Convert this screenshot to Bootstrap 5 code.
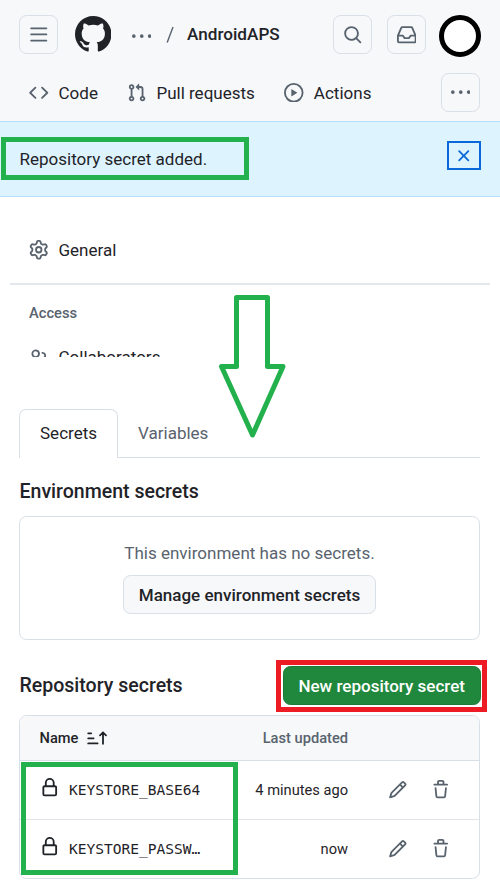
<!DOCTYPE html>
<html lang="en">
<head>
<meta charset="utf-8">
<meta name="viewport" content="width=device-width, initial-scale=1">
<title>AndroidAPS · Secrets</title>
<link href="https://cdn.jsdelivr.net/npm/bootstrap@5.3.0/dist/css/bootstrap.min.css" rel="stylesheet">
<style>
:root{--line:#d9dfe6;--ink:#1f2328;--soft:#59636e;--mark:#22b14c}
body{font-family:Roboto,sans-serif;font-size:17.03px;line-height:24px;color:var(--ink);background:#fff;width:500px;height:886px;overflow:hidden}
svg{display:block;flex:none;fill:currentColor}
.ico{width:19.5px;height:19.5px}
.soft{color:var(--soft)}
.topbar{height:121px;background:#f6f8fa;padding:15px 20px 0 19px}
.toprow{height:39px}
.sq{width:39px;height:39px;padding:0;border:1.3px solid var(--line);border-radius:7.5px;color:var(--soft);background:transparent;display:flex;align-items:center;justify-content:center}
.logo{width:36.5px;height:36.5px;margin-left:16.5px}
.crumb{margin-left:20.5px}
.slash{margin:0 13px 0 15px}
.repo{font-weight:500;font-size:17.15px;margin-top:-1px}
.avatar{width:42px;height:42px;border:5px solid #000;border-radius:50%;background:#fff;margin:2px -1px 0 13px}
.subnav{margin-top:19px;padding-left:10px}
.subnav .tabitem{display:flex;align-items:center;gap:10px}
.notice{height:76px;background:#ddf4ff;border-top:1.3px solid #b5defc;border-bottom:1.3px solid #b5defc;padding:0 19.5px}
.closer{width:34px;height:29px;border:2px solid #0969da;border-radius:0;color:#0969da;padding:0;display:flex;align-items:center;justify-content:center;margin-top:-7px;background:none}
.side{height:159.5px;overflow:hidden;padding:41px 10px 0}
.side .item{padding-left:19px;gap:10px}
.side hr{margin:21px 0 16px;border:0;height:2px;background:#e3e6ea;opacity:1}
.side .group{font-size:14.7px;font-weight:500;padding-left:19px;margin-bottom:20px}
.main{padding:0 20px 0 19px}
.tabs{margin-top:52.5px;height:49px;border-bottom:1.3px solid var(--line);border-radius:0}
.tabs .nav-link{padding:0 20.5px;height:49px;line-height:49px;color:var(--soft);border:0;border-radius:7px 7px 0 0}
.tabs .nav-link.active{border:1.3px solid var(--line);border-bottom:0;background:#fff;color:var(--ink);padding:0 19.5px 0 20px;line-height:47px}
.heading{font-size:19.55px;font-weight:500;line-height:24px;margin:0;padding-left:.5px}
.blank{margin-top:12px;height:124px;border:1.3px solid var(--line);border-radius:7.5px;padding-top:24px;text-align:center}
.act{height:39px;padding:0 14.5px;font-size:17.03px;font-weight:500;line-height:36px;border-radius:7.5px;border:1.3px solid var(--line);background:#f6f8fa;color:var(--ink)}
.act.go{background:#1f883d;color:#fff;border-color:#1c7a37;margin-right:-.5px}
.grid{margin-top:10px;border:1.3px solid var(--line);border-radius:7.5px;font-size:14.65px;overflow:hidden}
.line{display:flex;align-items:center;height:59px;padding-left:19.5px}
.line+.line{border-top:1.3px solid #e1e5ea}
.line.top{height:43.5px;background:#f6f8fa;font-weight:500}
.line.top+.line{border-top-color:var(--line)}
.c1{width:170px}.c2{width:138.5px;text-align:right}
.code{font-family:"DejaVu Sans Mono",monospace;font-size:14.56px;margin-left:10px}
.pen{margin-left:39.5px}.bin{margin-left:24px}
.frame{position:absolute;border:5px solid var(--mark);pointer-events:none}
.f1{left:1px;top:137px;width:248px;height:43px}
.f2{left:276px;top:660px;width:211px;height:52px;border-color:#ed1c24}
.f3{left:21px;top:762px;width:217px;height:113px}
.arrow{position:absolute;left:215px;top:290px}
</style>
<script src="https://cdn.jsdelivr.net/npm/bootstrap@5.3.0/dist/js/bootstrap.bundle.min.js"></script>
</head>
<body class="position-relative">
<svg width="0" height="0" class="position-absolute" aria-hidden="true">
<symbol id="dots" viewBox="0 0 16 16"><path d="M8 9a1.5 1.5 0 1 0 0-3 1.5 1.5 0 0 0 0 3ZM1.5 9a1.5 1.5 0 1 0 0-3 1.5 1.5 0 0 0 0 3Zm13 0a1.5 1.5 0 1 0 0-3 1.5 1.5 0 0 0 0 3Z"/></symbol>
<symbol id="lock" viewBox="0 0 16 16"><path d="M4 4a4 4 0 0 1 8 0v2h.25c.966 0 1.75.784 1.75 1.75v5.5A1.75 1.75 0 0 1 12.25 15h-8.5A1.75 1.75 0 0 1 2 13.25v-5.5C2 6.784 2.784 6 3.75 6H4Zm8.25 3.5h-8.5a.25.25 0 0 0-.25.25v5.5c0 .138.112.25.25.25h8.5a.25.25 0 0 0 .25-.25v-5.5a.25.25 0 0 0-.25-.25ZM10.5 6V4a2.5 2.5 0 1 0-5 0v2Z"/></symbol>
<symbol id="pencil" viewBox="0 0 16 16"><path d="M11.013 1.427a1.75 1.75 0 0 1 2.474 0l1.086 1.086a1.75 1.75 0 0 1 0 2.474l-8.61 8.61c-.21.21-.47.364-.756.445l-3.251.93a.75.75 0 0 1-.927-.928l.929-3.25c.081-.286.235-.547.445-.758l8.61-8.61Zm.176 4.823L9.75 4.81l-6.286 6.287a.253.253 0 0 0-.064.108l-.558 1.953 1.953-.558a.253.253 0 0 0 .108-.064Zm1.238-3.763a.25.25 0 0 0-.354 0L10.811 3.75l1.439 1.44 1.263-1.263a.25.25 0 0 0 0-.354Z"/></symbol>
<symbol id="trash" viewBox="0 0 16 16"><path d="M11 1.75V3h2.25a.75.75 0 0 1 0 1.5H2.75a.75.75 0 0 1 0-1.5H5V1.75C5 .784 5.784 0 6.75 0h2.5C10.216 0 11 .784 11 1.75ZM4.496 6.675l.66 6.6a.25.25 0 0 0 .249.225h5.19a.25.25 0 0 0 .249-.225l.66-6.6a.75.75 0 0 1 1.492.149l-.66 6.6A1.748 1.748 0 0 1 10.595 15h-5.19a1.75 1.75 0 0 1-1.741-1.575l-.66-6.6a.75.75 0 1 1 1.492-.15ZM6.5 1.75V3h3V1.75a.25.25 0 0 0-.25-.25h-2.5a.25.25 0 0 0-.25.25Z"/></symbol>
</svg>

<header class="topbar">
  <div class="toprow d-flex align-items-center">
    <button class="sq" aria-label="Menu"><svg class="ico" viewBox="0 0 16 16"><path d="M1 2.75A.75.75 0 0 1 1.75 2h12.5a.75.75 0 0 1 0 1.5H1.75A.75.75 0 0 1 1 2.75Zm0 5A.75.75 0 0 1 1.75 7h12.5a.75.75 0 0 1 0 1.5H1.75A.75.75 0 0 1 1 7.75ZM1.75 12h12.5a.75.75 0 0 1 0 1.5H1.75a.75.75 0 0 1 0-1.5Z"/></svg></button>
    <svg class="logo" viewBox="0 0 16 16"><path d="M8 0c4.42 0 8 3.58 8 8a8.013 8.013 0 0 1-5.45 7.59c-.4.08-.55-.17-.55-.38 0-.27.01-1.13.01-2.2 0-.75-.25-1.23-.54-1.48 1.78-.2 3.65-.88 3.65-3.95 0-.88-.31-1.59-.82-2.15.08-.2.36-1.02-.08-2.12 0 0-.67-.22-2.2.82-.64-.18-1.32-.27-2-.27-.68 0-1.36.09-2 .27-1.53-1.03-2.2-.82-2.2-.82-.44 1.1-.16 1.92-.08 2.12-.51.56-.82 1.28-.82 2.15 0 3.06 1.86 3.75 3.64 3.95-.23.2-.44.55-.51 1.07-.46.21-1.61.55-2.33-.66-.15-.24-.6-.83-1.23-.82-.67.01-.27.38.01.53.34.19.73.9.82 1.13.16.45.68 1.31 2.69.94 0 .67.01 1.3.01 1.49 0 .21-.15.45-.55.38A7.995 7.995 0 0 1 0 8c0-4.42 3.58-8 8-8Z"/></svg>
    <svg class="ico soft crumb mt-1"><use href="#dots"/></svg>
    <svg class="soft slash" width="8" height="18" viewBox="0 0 8 18"><path d="M7 1 1.2 16.6" fill="none" stroke="currentColor" stroke-width="1.4"/></svg>
    <span class="repo">AndroidAPS</span>
    <button class="sq ms-auto" aria-label="Search"><svg class="ico" viewBox="0 0 16 16"><path d="M10.68 11.74a6 6 0 0 1-7.922-8.982 6 6 0 0 1 8.982 7.922l3.04 3.04a.749.749 0 0 1-.326 1.275.749.749 0 0 1-.734-.215ZM11.5 7a4.499 4.499 0 1 0-8.997 0A4.499 4.499 0 0 0 11.5 7Z"/></svg></button>
    <button class="sq" style="margin-left:15px" aria-label="Inbox"><svg class="ico" viewBox="0 0 16 16"><path d="M2.8 2.06A1.75 1.75 0 0 1 4.41 1h7.18c.7 0 1.333.417 1.61 1.06l2.74 6.395c.04.093.06.194.06.295v4.5A1.75 1.75 0 0 1 14.25 15H1.75A1.75 1.75 0 0 1 0 13.25v-4.5c0-.101.02-.202.06-.295Zm1.61.44a.25.25 0 0 0-.23.152L1.887 8H4.75a.75.75 0 0 1 .6.3L6.625 10h2.75l1.275-1.7a.75.75 0 0 1 .6-.3h2.863L11.82 2.652a.25.25 0 0 0-.23-.152Zm10.09 7h-2.875l-1.275 1.7a.75.75 0 0 1-.6.3h-3.5a.75.75 0 0 1-.6-.3L4.375 9.5H1.5v3.75c0 .138.112.25.25.25h12.5a.25.25 0 0 0 .25-.25Z"/></svg></button>
    <div class="avatar"></div>
  </div>
  <nav class="toprow subnav d-flex align-items-center">
    <span class="tabitem"><svg class="ico soft" viewBox="0 0 16 16"><path d="m11.28 3.22 4.25 4.25a.75.75 0 0 1 0 1.06l-4.25 4.25a.749.749 0 0 1-1.275-.326.749.749 0 0 1 .215-.734L13.94 8l-3.72-3.72a.749.749 0 0 1 .326-1.275.749.749 0 0 1 .734.215Zm-6.56 0a.751.751 0 0 1 1.042.018.751.751 0 0 1 .018 1.042L2.06 8l3.72 3.72a.749.749 0 0 1-.326 1.275.749.749 0 0 1-.734-.215L.47 8.53a.75.75 0 0 1 0-1.06Z"/></svg>Code</span>
    <span class="tabitem" style="margin-left:29px"><svg class="ico soft" viewBox="0 0 16 16"><path d="M1.5 3.25a2.25 2.25 0 1 1 3 2.122v5.256a2.251 2.251 0 1 1-1.5 0V5.372A2.25 2.25 0 0 1 1.5 3.25Zm5.677-.177L9.573.677A.25.25 0 0 1 10 .854V2.5h1A2.5 2.5 0 0 1 13.5 5v5.628a2.251 2.251 0 1 1-1.5 0V5a1 1 0 0 0-1-1h-1v1.646a.25.25 0 0 1-.427.177L7.177 3.427a.25.25 0 0 1 0-.354ZM3.75 2.5a.75.75 0 1 0 0 1.5.75.75 0 0 0 0-1.5Zm0 9.5a.75.75 0 1 0 0 1.5.75.75 0 0 0 0-1.5Zm8.25.75a.75.75 0 1 0 1.5 0 .75.75 0 0 0-1.5 0Z"/></svg>Pull requests</span>
    <span class="tabitem" style="margin-left:29.5px"><svg class="ico soft" viewBox="0 0 16 16"><path d="M8 0a8 8 0 1 1 0 16A8 8 0 0 1 8 0ZM1.5 8a6.5 6.5 0 1 0 13 0 6.5 6.5 0 0 0-13 0Zm4.879-2.773 4.264 2.559a.25.25 0 0 1 0 .428l-4.264 2.559A.25.25 0 0 1 6 10.559V5.442a.25.25 0 0 1 .379-.215Z"/></svg>Actions</span>
    <button class="sq ms-auto" aria-label="More"><svg class="ico"><use href="#dots"/></svg></button>
  </nav>
</header>

<div class="notice d-flex align-items-center justify-content-between">
  <span>Repository secret added.</span>
  <button class="closer" aria-label="Dismiss"><svg class="ico" viewBox="0 0 16 16"><path d="M3.72 3.72a.75.75 0 0 1 1.06 0L8 6.94l3.22-3.22a.749.749 0 0 1 1.275.326.749.749 0 0 1-.215.734L9.06 8l3.22 3.22a.749.749 0 0 1-.326 1.275.749.749 0 0 1-.734-.215L8 9.06l-3.22 3.22a.751.751 0 0 1-1.042-.018.751.751 0 0 1-.018-1.042L6.94 8 3.72 4.78a.75.75 0 0 1 0-1.06Z"/></svg></button>
</div>

<nav class="side">
  <div class="item d-flex align-items-center"><svg class="ico soft" viewBox="0 0 16 16"><path d="M8 0a8.2 8.2 0 0 1 .701.031C9.444.095 9.99.645 10.16 1.29l.288 1.107c.018.066.079.158.212.224.231.114.454.243.668.386.123.082.233.09.299.071l1.103-.303c.644-.176 1.392.021 1.82.63.27.385.506.792.704 1.218.315.675.111 1.422-.364 1.891l-.814.806c-.049.048-.098.147-.088.294.016.257.016.515 0 .772-.01.147.038.246.088.294l.814.806c.475.469.679 1.216.364 1.891a7.977 7.977 0 0 1-.704 1.217c-.428.61-1.176.807-1.82.63l-1.102-.302c-.067-.019-.177-.011-.3.071a5.909 5.909 0 0 1-.668.386c-.133.066-.194.158-.211.224l-.29 1.106c-.168.646-.715 1.196-1.458 1.26a8.006 8.006 0 0 1-1.402 0c-.743-.064-1.289-.614-1.458-1.26l-.289-1.106c-.018-.066-.079-.158-.212-.224a5.738 5.738 0 0 1-.668-.386c-.123-.082-.233-.09-.299-.071l-1.103.303c-.644.176-1.392-.021-1.82-.63a8.12 8.12 0 0 1-.704-1.218c-.315-.675-.111-1.422.363-1.891l.815-.806c.05-.048.098-.147.088-.294a6.214 6.214 0 0 1 0-.772c.01-.147-.038-.246-.088-.294l-.815-.806C.635 6.045.431 5.298.746 4.623a7.92 7.92 0 0 1 .704-1.217c.428-.61 1.176-.807 1.82-.63l1.102.302c.067.019.177.011.3-.071.214-.143.437-.272.668-.386.133-.066.194-.158.211-.224l.29-1.106C6.009.645 6.556.095 7.299.03 7.53.01 7.764 0 8 0Zm-.571 1.525c-.036.003-.108.036-.137.146l-.289 1.105c-.147.561-.549.967-.998 1.189-.173.086-.34.183-.5.29-.417.278-.97.423-1.529.27l-1.103-.303c-.109-.03-.175.016-.195.045-.22.312-.412.644-.573.99-.014.031-.021.11.059.19l.815.806c.411.406.562.957.53 1.456a4.709 4.709 0 0 0 0 .582c.032.499-.119 1.05-.53 1.456l-.815.806c-.081.08-.073.159-.059.19.162.346.353.677.573.989.02.03.085.076.195.046l1.102-.303c.56-.153 1.113-.008 1.53.27.161.107.328.204.501.29.447.222.85.629.997 1.189l.289 1.105c.029.109.101.143.137.146a6.6 6.6 0 0 0 1.142 0c.036-.003.108-.036.137-.146l.289-1.105c.147-.561.549-.967.998-1.189.173-.086.34-.183.5-.29.417-.278.97-.423 1.529-.27l1.103.303c.109.029.175-.016.195-.045.22-.313.411-.644.573-.99.014-.031.021-.11-.059-.19l-.815-.806c-.411-.406-.562-.957-.53-1.456a4.709 4.709 0 0 0 0-.582c-.032-.499.119-1.05.53-1.456l.815-.806c.081-.08.073-.159.059-.19a6.464 6.464 0 0 0-.573-.989c-.02-.03-.085-.076-.195-.046l-1.102.303c-.56.153-1.113.008-1.53-.27a4.44 4.44 0 0 0-.501-.29c-.447-.222-.85-.629-.997-1.189l-.289-1.105c-.029-.11-.101-.143-.137-.146a6.6 6.6 0 0 0-1.142 0ZM11 8a3 3 0 1 1-6 0 3 3 0 0 1 6 0ZM9.5 8a1.5 1.5 0 1 0-3.001.001A1.5 1.5 0 0 0 9.5 8Z"/></svg>General</div>
  <hr>
  <div class="group soft">Access</div>
  <div class="item d-flex align-items-center"><svg class="ico soft" viewBox="0 0 16 16"><path d="M2 5.5a3.5 3.5 0 1 1 5.898 2.549 5.508 5.508 0 0 1 3.034 4.084.75.75 0 1 1-1.482.235 4 4 0 0 0-7.9 0 .75.75 0 0 1-1.482-.236A5.507 5.507 0 0 1 3.102 8.05 3.493 3.493 0 0 1 2 5.5ZM11 4a3.001 3.001 0 0 1 2.22 5.018 5.01 5.01 0 0 1 2.56 3.012.749.749 0 0 1-.885.954.752.752 0 0 1-.549-.514 3.507 3.507 0 0 0-2.522-2.372.75.75 0 0 1-.574-.73v-.352a.75.75 0 0 1 .416-.672A1.5 1.5 0 0 0 11 5.5.75.75 0 0 1 11 4Zm-5.5-.5a2 2 0 1 0-.001 3.999A2 2 0 0 0 5.5 3.5Z"/></svg>Collaborators</div>
</nav>

<main class="main">
  <div class="nav nav-tabs tabs">
    <a class="nav-link active">Secrets</a>
    <a class="nav-link">Variables</a>
  </div>
  <h2 class="heading" style="margin-top:22px">Environment secrets</h2>
  <div class="blank">
    <div class="soft">This environment has no secrets.</div>
    <button class="btn act" style="margin-top:10px">Manage environment secrets</button>
  </div>
  <div class="d-flex align-items-center justify-content-between" style="margin-top:26px">
    <h2 class="heading">Repository secrets</h2>
    <button class="btn act go">New repository secret</button>
  </div>
  <div class="grid d-block">
    <div class="line top">
      <div class="c1 d-flex align-items-center">Name
        <svg class="ms-2" width="22" height="16" viewBox="0 0 22 16" stroke="currentColor" stroke-width="1.8" stroke-linecap="round" style="fill:none"><path d="M2.2 3.3h3M2.2 8.3h5.4M2.2 13.4h9.4M17 13.8V2.8M14 5.4l3-3 3 3"/></svg>
      </div>
      <div class="c2 soft">Last updated</div>
    </div>
    <div class="line">
      <div class="c1 d-flex align-items-center"><svg class="ico mb-1"><use href="#lock"/></svg><span class="code">KEYSTORE_BASE64</span></div>
      <div class="c2">4 minutes ago</div>
      <svg class="ico soft pen"><use href="#pencil"/></svg><svg class="ico soft bin"><use href="#trash"/></svg>
    </div>
    <div class="line">
      <div class="c1 d-flex align-items-center"><svg class="ico mb-1"><use href="#lock"/></svg><span class="code">KEYSTORE_PASSW…</span></div>
      <div class="c2">now</div>
      <svg class="ico soft pen"><use href="#pencil"/></svg><svg class="ico soft bin"><use href="#trash"/></svg>
    </div>
  </div>
</main>

<div class="frame f1"></div>
<div class="frame f2"></div>
<div class="frame f3"></div>
<svg class="arrow" width="75" height="152" viewBox="0 0 75 152" style="fill:none" stroke="#22b14c" stroke-width="5" stroke-linejoin="round"><path d="M21.5 7.5h31v69H68L37.500 145 6.500 76.500h15Z"/></svg>
</body>
</html>
